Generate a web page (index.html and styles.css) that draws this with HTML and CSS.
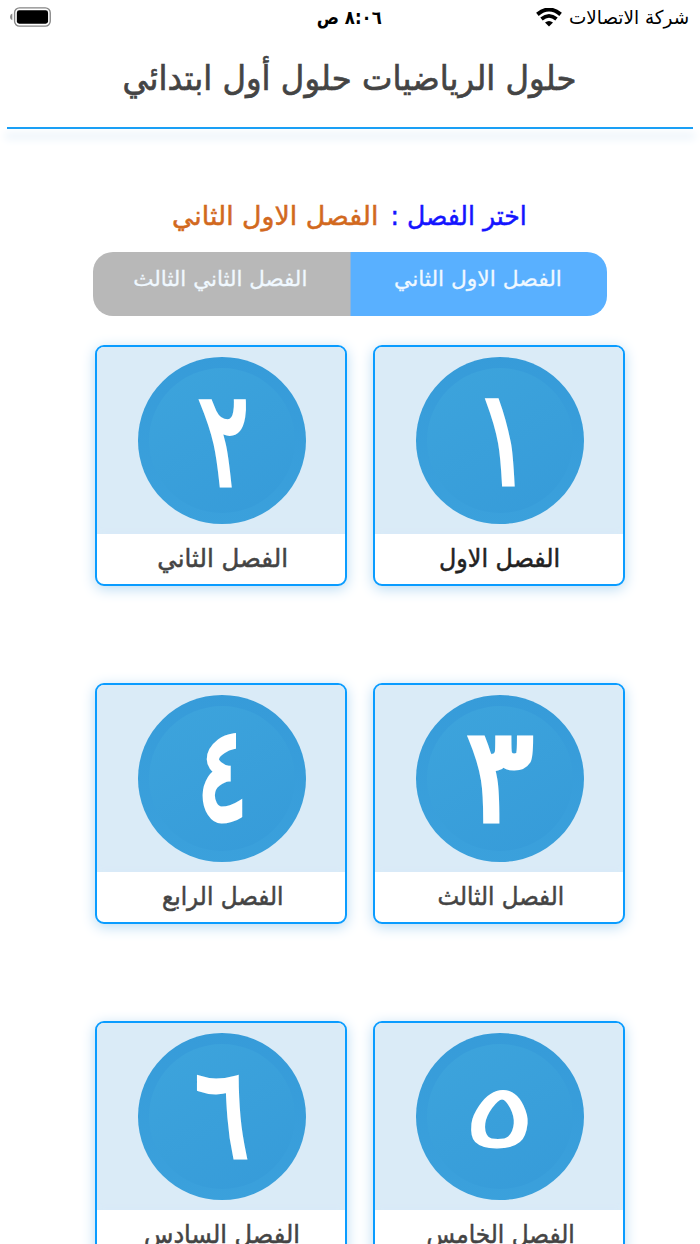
FILE: index.html
```
<!DOCTYPE html>
<html lang="ar" dir="rtl">
<head>
<meta charset="utf-8">
<title>حلول الرياضيات</title>
<link rel="stylesheet" href="styles.css">
</head>
<body>
<div class="status">
  <div class="carrier"><span class="fit carrier-name">شركة الاتصالات</span>
    <svg class="wifi" viewBox="0 0 26 19" width="26" height="19"><path d="M1.4 6.4Q13-3.3 24.6 6.4" fill="none" stroke="#000" stroke-width="4"/><path d="M5.5 11Q13 4.8 20.5 11" fill="none" stroke="#000" stroke-width="3.8"/><path d="M9 14.5Q13 11.4 17 14.5L13 18.5Z"/></svg>
  </div>
  <div class="clock"><span class="fit clock-text">٨:٠٦ ص</span></div>
  <svg class="battery" viewBox="0 0 42 20" width="41" height="20"><path d="M2.4 6.5Q0 7.2 0 10T2.4 13.3Z" fill="#888"/><rect x="4.7" y=".7" width="36.5" height="18.6" rx="5" fill="none" stroke="#858585" stroke-width="1.4"/><rect x="7" y="3.2" width="32" height="13.6" rx="2.5"/></svg>
</div>
<header class="title"><h1 class="fit title-text">حلول الرياضيات حلول أول ابتدائي</h1></header>
<div class="rule"></div>
<main>
  <h2 class="choose"><span class="fit choose-label">اختر الفصل :</span><span class="fit choose-value">الفصل الاول الثاني</span></h2>
  <div class="tabs">
    <div class="tab active"><span class="fit tab-a">الفصل الاول الثاني</span></div>
    <div class="tab"><span class="fit tab-b">الفصل الثاني الثالث</span></div>
  </div>
  <div class="grid">
    <div class="card"><div class="cover"><div class="disc"><span class="num n1">١</span></div></div><div class="label dark"><span class="fit l1">الفصل الاول</span></div></div>
    <div class="card"><div class="cover"><div class="disc"><span class="num n2">٢</span></div></div><div class="label"><span class="fit l2">الفصل الثاني</span></div></div>
    <div class="card"><div class="cover"><div class="disc"><span class="num n3">٣</span></div></div><div class="label"><span class="fit l3">الفصل الثالث</span></div></div>
    <div class="card"><div class="cover"><div class="disc"><span class="num n4">٤</span></div></div><div class="label"><span class="fit l4">الفصل الرابع</span></div></div>
    <div class="card"><div class="cover"><div class="disc"><span class="num n5">٥</span></div></div><div class="label"><span class="fit l5">الفصل الخامس</span></div></div>
    <div class="card"><div class="cover"><div class="disc"><span class="num n6">٦</span></div></div><div class="label"><span class="fit l6">الفصل السادس</span></div></div>
  </div>
</main>
</body>
</html>
```
FILE: styles.css
```
* { box-sizing: border-box; }
html { height: 1244px; overflow: hidden; }
body { margin: 0; height: 1244px; overflow: hidden; background: #fff; font-family: "DejaVu Sans", sans-serif; color: #444; }
.fit { display: inline-block; white-space: nowrap; line-height: 1; }
.status { display: grid; grid-template-columns: 1fr auto 1fr; height: 36px; padding: 0 11px 2px 10px; align-items: center; color: #000; font-size: 19px; }
.carrier { display: flex; align-items: center; gap: 3px; }
.carrier-name { transform: scaleX(.968); transform-origin: right; }
.clock-text { font-weight: 700; transform: scaleX(.87); }
.battery { justify-self: end; }
.title { height: 91px; display: flex; justify-content: center; align-items: center; padding-bottom: 6px; }
.title-text { margin: 0; font-size: 31px; font-weight: 400; transform: translateX(-1px) scale(1.044, 1.1); -webkit-text-stroke: .6px; }
.rule { height: 2px; margin: 0 7px; background: #1a9ff5; box-shadow: 0 8px 8px 2px #e9f2fa; }
.choose { display: flex; justify-content: center; gap: 14px; margin: 0; padding-top: 74px; height: 123px; font-size: 26px; font-weight: 400; align-items: flex-start; -webkit-text-stroke: .5px; }
.choose-label { color: #1414ff; transform: translateX(1px) scaleX(.965); }
.choose-value { color: #d2691e; transform: translateX(3px) scaleX(1.03); }
.tabs { display: flex; width: 514px; height: 64px; margin: 0 auto; border-radius: 20px; overflow: hidden; }
.tab { flex: 1; background: #b8b8b8; color: #f0f8ff; display: flex; justify-content: center; padding-top: 17px; font-size: 21px; -webkit-text-stroke: .3px; }
.tab.active { background: #59b0ff; border-left: 1px solid #8cb4dc; }
.tab-a { transform: translateX(-1px) scaleX(1.037); }
.tab-b { transform: translateX(-1px) scaleX(1.02); }
.grid { display: grid; grid-template-columns: 252px 252px; column-gap: 26px; row-gap: 97px; width: 530px; margin: 29px 75px 0 0; }
.card { height: 241px; border: 2px solid #0a9cff; border-radius: 9px; box-shadow: 0 3px 14px #b9dbf3; overflow: hidden; background: #fff; }
.cover { height: 187px; background: #daebf7; display: flex; justify-content: center; padding-top: 10px; padding-left: 2px; }
.disc { width: 168px; height: 167px; border-radius: 50%; border: 11px solid transparent; background: linear-gradient(150deg, #3da4dc, #369bd9) padding-box, linear-gradient(190deg, #369bd9, #3ba1dc) border-box; display: flex; justify-content: center; align-items: center; color: #fff; }
.num { font-size: 127px; line-height: 1; font-weight: 400; -webkit-text-stroke: 5px #fff; }
.n1 { transform: translate(3px, -1px) skewX(3deg) scale(.78, 1.03); }
.n2 { transform: translateX(5px) skewX(6deg) scale(.74, 1.03); }
.n3 { transform: translateY(-2px) scale(1, 1.03); }
.n4 { transform: translateY(-3px) scale(.76, 1.03); }
.n5 { transform: skewX(-6deg) scale(1.05, .69); -webkit-text-stroke-width: 2px; }
.n6 { transform: translateY(-2px) scale(.8, .98); }
.label { height: 50px; display: flex; justify-content: center; padding-top: 12px; font-size: 25px; box-shadow: 0 0 8px #d8eaf8; -webkit-text-stroke: .5px; }
.dark { color: #222; }
.l1 { transform: translateX(1px) scaleX(.953); }
.l2 { transform: translateX(2px) scaleX(.98); }
.l3 { transform: translateX(2px) scaleX(.92); }
.l4 { transform: translateX(2px) scaleX(.925); }
.l5 { transform: translateX(2px) scaleX(.93); }
.l6 { transform: translateX(1px) scaleX(.963); }
```
